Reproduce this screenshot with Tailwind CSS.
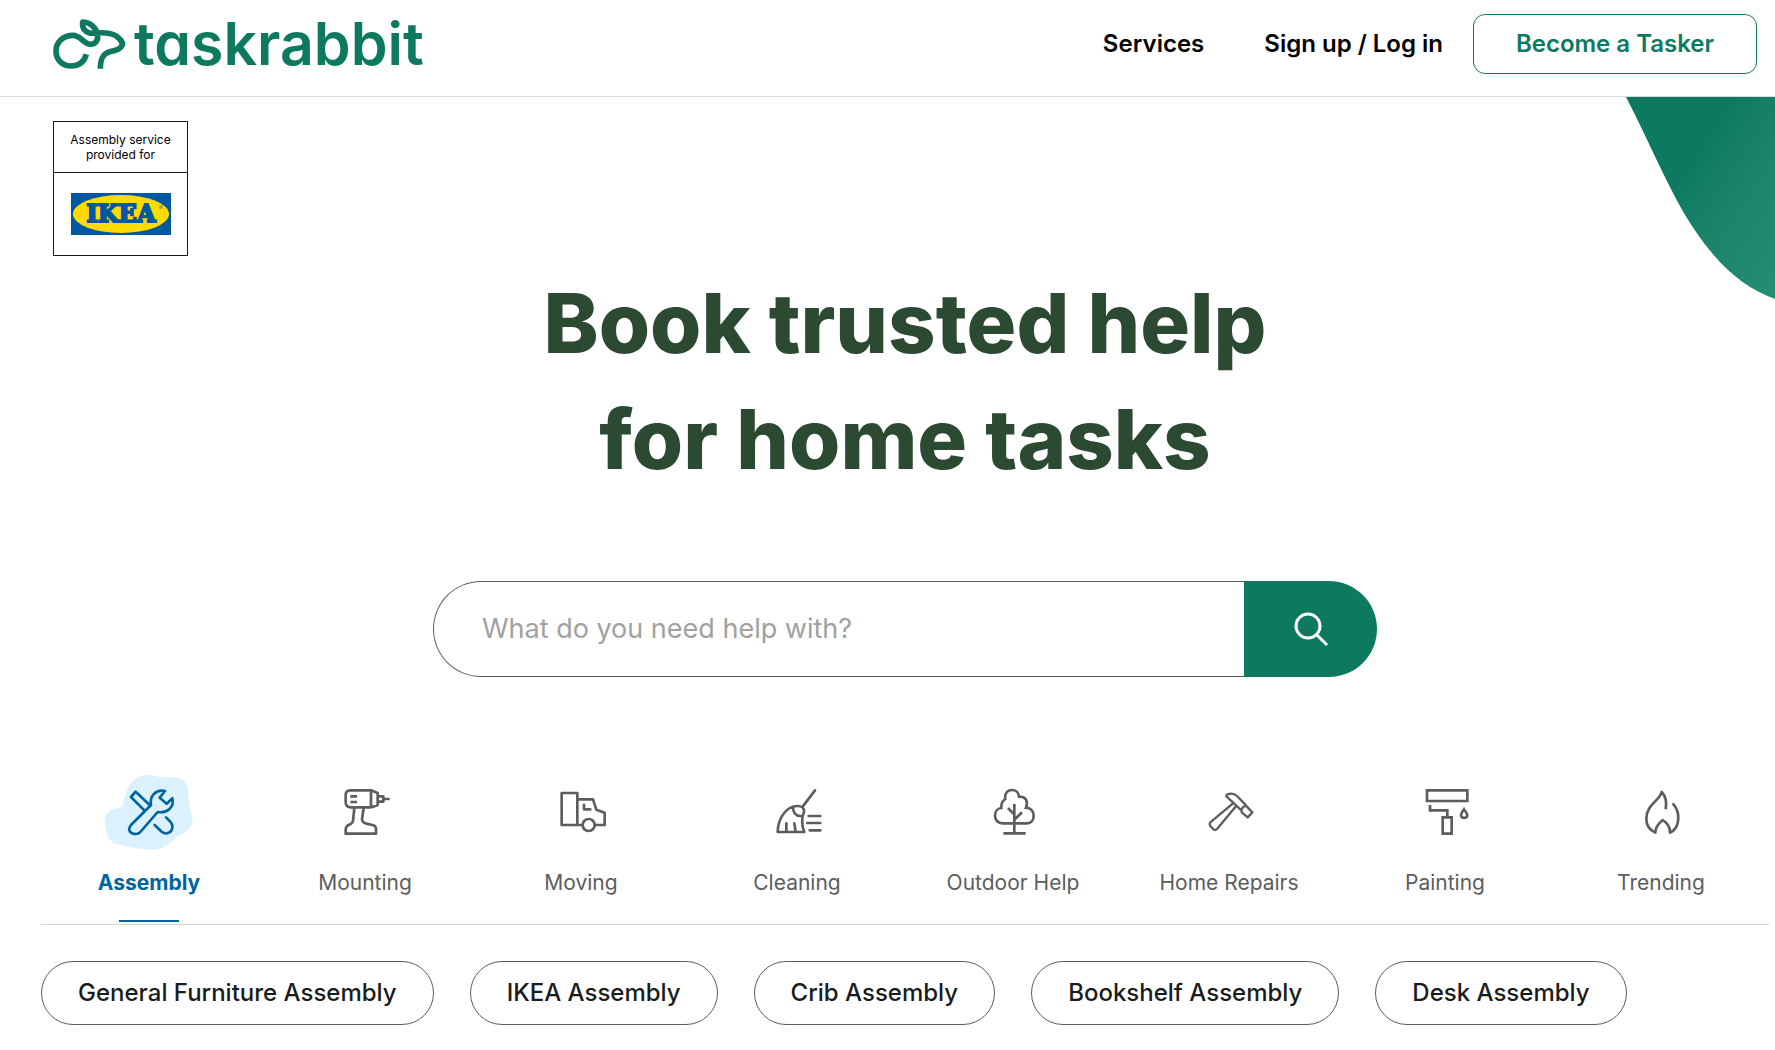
<!doctype html>
<html lang="en">

<head>
    <meta charset="utf-8">
    <meta name="viewport" content="width=device-width, initial-scale=1.0">
    <title>Taskrabbit</title>
    <script src="https://cdn.jsdelivr.net/npm/@tailwindcss/browser@4"></script>
</head>

<body class="bg-white font-['Inter',sans-serif] text-black min-h-screen overflow-x-hidden">
    <header class="flex items-center justify-between h-[97px] border-b border-[#d9dce4] pl-[53px] pr-[18px]">
        <a href="#" class="flex items-center gap-2 pb-[9px] text-[#0d7a5f]" aria-label="taskrabbit">
            <svg class="w-[73px] h-[50px]" viewBox="0 0 219 150" fill="none" stroke="currentColor" stroke-width="17" stroke-linejoin="round">
                <path d="M100 106C94 128 78 141 54 141C26 141 9 120 9 96C9 68 32 49 60 49C84 49 92 76 112 76C130 76 138 60 132 42C126 22 108 9 89 9C86 32 102 46 126 42C150 40 175 42 188 50C200 58 206 66 209 74C205 90 190 94 170 98C150 104 142 118 142 149" />
            </svg>
            <span class="text-[59px] leading-[60px] font-semibold"><span class="[font-feature-settings:'cv11']">ta</span>skrabbit</span>
        </a>
        <nav class="flex items-center pb-2 text-2xl font-semibold">
            <a href="#" class="mr-[60px]">Services</a>
            <a href="#" class="mr-[30px]">Sign up / Log in</a>
            <a href="#" class="flex items-center justify-center w-[284px] h-[60px] border border-[#0d7a5f] rounded-xl text-[#0d7a5f]">Become a Tasker</a>
        </nav>
    </header>

    <main class="relative pl-[41px] pr-[6px]">
        <!-- Corner shape -->
        <svg class="absolute top-0 right-0 w-[149px] h-[202px]" viewBox="0 0 149 202">
            <defs>
                <linearGradient id="corner" gradientUnits="userSpaceOnUse" x1="80" y1="40" x2="201" y2="120">
                    <stop offset="0" stop-color="#0d7a5f" />
                    <stop offset="0.4" stop-color="#1a8469" />
                    <stop offset="1" stop-color="#238e73" />
                </linearGradient>
            </defs>
            <path d="M0 0H149V202C118 191 92 168 68 132C44 96 24 46 0 0Z" fill="url(#corner)" />
        </svg>

        <!-- IKEA badge -->
        <div class="pt-6 pl-3">
            <div class="w-[135px] h-[135px] border border-[#1a1a1a] flex flex-col">
                <p class="h-[51px] pt-[10px] border-b border-[#1a1a1a] text-center text-xs leading-[15px]">Assembly service<br>provided for</p>
                <svg class="w-[100px] h-[42px] m-auto" viewBox="0 0 100 42">
                    <rect width="100" height="42" fill="#0058a3" />
                    <ellipse cx="50" cy="21" rx="48" ry="19" fill="#ffdb00" />
                    <text x="50" y="29" text-anchor="middle" class="font-['DejaVu_Serif',serif] font-bold text-[24px]" fill="#0058a3" stroke="#0058a3" stroke-width="2">IKEA</text>
                    <circle cx="90" cy="14" r="2" fill="#a3a05a" />
                </svg>
            </div>
        </div>

        <h1 class="mt-[9px] text-center text-[83px] leading-[116px] font-extrabold text-[#2c4a32]">Book trusted help<br>for home tasks</h1>

        <form class="flex w-[944px] max-w-full h-24 mx-auto mt-[84px]">
            <input type="text" aria-label="What do you need help with?" placeholder="What do you need help with?" class="flex-1 min-w-0 pl-12 text-[27px] border border-r-0 border-[#5c5d5d] rounded-l-full placeholder:text-[#a1a1a1] outline-none">
            <button type="submit" aria-label="Search" class="flex items-center justify-center w-[133px] bg-[#0d7a5f] text-white rounded-r-full">
                <svg class="w-9 h-9" viewBox="0 0 36 36" fill="none" stroke="currentColor" stroke-width="3">
                    <circle cx="15" cy="15" r="12" />
                    <path d="M23 23L34 34" />
                </svg>
            </button>
        </form>

        <!-- Categories -->
        <div class="grid grid-cols-8 mt-[94px] border-b border-[#d5d6d6] text-[21px] text-[#5c5d5d]" role="tablist">
            <button role="tab" aria-selected="true" class="relative flex flex-col items-center h-[153px] font-bold text-[#00649e]">
                <svg class="w-24 h-20" viewBox="0 0 288 240" fill="none" stroke="currentColor" stroke-width="8" stroke-linejoin="round" stroke-linecap="round">
                    <path d="M65 107C72 70 85 12 142 12C160 13 165 18 182 18C215 20 258 10 262 65C263 110 268 110 275 140C280 165 255 185 237 192C215 205 200 232 160 236C120 238 80 225 47 219C20 212 12 180 11 150C12 118 45 112 65 107Z" fill="#dbf1fe" stroke="none" />
                    <path d="M192 60C165 54 145 75 150 102L90 162C78 178 88 189 105 189C110 189 115 187 118 183L170 123C200 128 220 108 214 82L197 98L176 80Z" />
                    <path d="M130 118L90 78L104 62L146 102" />
                    <path d="M161 162L182 182C195 193 214 185 214 168C214 160 212 156 208 152L195 139" />
                </svg>
                <span class="mt-4 leading-8">Assembly</span>
                <span class="absolute bottom-[2px] w-[60px] h-[2px] bg-[#00649e]"></span>
            </button>
            <button role="tab" class="flex flex-col items-center h-[153px]">
                <svg class="w-24 h-20" viewBox="0 0 288 240" fill="none" stroke="currentColor" stroke-width="8" stroke-linejoin="round">
                    <path d="M162 58H100Q86 58 86 72V93Q86 109 102 109H162ZM162 58L182 66V102L164 109M184 76H199V92H184M199 84H218M100 76H120M100 93H120" />
                    <path d="M112 111L108 150Q106 158 96 161Q86 165 86 176V188H177V172Q176 164 166 162L148 158Q135 155 135 145L140 111" />
                </svg>
                <span class="mt-4 leading-8">Mounting</span>
            </button>
            <button role="tab" class="flex flex-col items-center h-[153px]">
                <svg class="w-24 h-20" viewBox="0 0 288 240" fill="none" stroke="currentColor" stroke-width="8" stroke-linejoin="round">
                    <path d="M86 66H133V162H86ZM136 85H180L190 116L215 125V162H186M133 162H148M153 98V115H175" />
                    <circle cx="167" cy="162" r="18" />
                </svg>
                <span class="mt-4 leading-8">Moving</span>
            </button>
            <button role="tab" class="flex flex-col items-center h-[153px]">
                <svg class="w-24 h-20" viewBox="0 0 288 240" fill="none" stroke="currentColor" stroke-width="8" stroke-linecap="round" stroke-linejoin="round">
                    <path d="M198 58L161 107M86 183C87 145 108 108 143 105C158 104 166 110 165 122C157 140 158 165 166 183ZM132 108C132 125 140 136 156 135M112 183V157M140 183L136 157" />
                    <path d="M179 135H214M175 156H214M182 178H214" />
                </svg>
                <span class="mt-4 leading-8">Cleaning</span>
            </button>
            <button role="tab" class="flex flex-col items-center h-[153px]">
                <svg class="w-24 h-20" viewBox="0 0 288 240" fill="none" stroke="currentColor" stroke-width="8">
                    <path d="M112 157H184C200 157 206 145 206 134C206 120 196 110 183 110C190 90 182 76 162 77C161 64 152 57 141 57C127 57 118 68 121 84C112 90 108 98 109 111C97 112 90 122 90 134C90 148 100 157 112 157Z" />
                    <path d="M148 99V187M129 111L148 131M171 124L148 146M115 187H182" />
                </svg>
                <span class="mt-4 leading-8">Outdoor Help</span>
            </button>
            <button role="tab" class="flex flex-col items-center h-[153px]">
                <svg class="w-24 h-20" viewBox="0 0 288 240" fill="none" stroke="currentColor" stroke-width="7" stroke-linejoin="round">
                    <path d="M134 74C143 66 158 66 168 75L196 104M134 74L181 118M181 118Q186 103 197 106L214 124L200 139L183 125Z" />
                    <path d="M156 97L87 155Q84 159 88 165L97 175Q103 179 108 174L165 106" />
                </svg>
                <span class="mt-4 leading-8">Home Repairs</span>
            </button>
            <button role="tab" class="flex flex-col items-center h-[153px]">
                <svg class="w-24 h-20" viewBox="0 0 288 240" fill="none" stroke="currentColor" stroke-width="8">
                    <path d="M90 58H211V90H90ZM99 102V118H151V138M137 139H164V188H137Z" />
                    <path d="M201 115C197 122 191 127 192 133C193 143 210 143 211 133C211 127 205 122 201 115Z" />
                </svg>
                <span class="mt-4 leading-8">Painting</span>
            </button>
            <button role="tab" class="flex flex-col items-center h-[153px]">
                <svg class="w-24 h-20" viewBox="0 0 288 240" fill="none" stroke="currentColor" stroke-width="8" stroke-linejoin="round">
                    <path d="M158 115C162 92 158 75 146 63C140 90 100 100 100 143C100 165 112 178 127 185C127 172 136 158 149 147C163 156 172 168 171 185C200 172 205 125 179 97" />
                </svg>
                <span class="mt-4 leading-8">Trending</span>
            </button>
        </div>

        <!-- Subcategories -->
        <div class="flex flex-wrap gap-9 mt-9 pb-6 text-2xl font-medium text-[#1a1c1c]">
            <button class="h-16 px-9 border border-[#5c5d5d] rounded-full">General Furniture Assembly</button>
            <button class="h-16 px-9 border border-[#5c5d5d] rounded-full">IKEA Assembly</button>
            <button class="h-16 px-9 border border-[#5c5d5d] rounded-full">Crib Assembly</button>
            <button class="h-16 px-9 border border-[#5c5d5d] rounded-full">Bookshelf Assembly</button>
            <button class="h-16 px-9 border border-[#5c5d5d] rounded-full">Desk Assembly</button>
        </div>
    </main>
</body>

</html>
